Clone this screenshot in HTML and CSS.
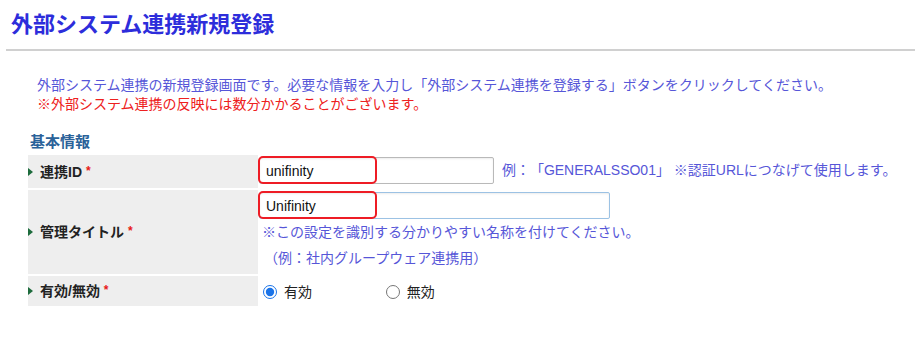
FILE: index.html
```html
<!DOCTYPE html>
<html lang="ja">
  <head>
    <meta charset="utf-8" />
    <title>外部システム連携新規登録</title>
    <link rel="stylesheet" href="styles.css">
  </head>

  <body>
    <h1 class="page-title">外部システム連携新規登録</h1>
    <hr class="title-rule">

    <div class="intro">
      <p class="intro-text">外部システム連携の新規登録画面です。必要な情報を入力し「外部システム連携を登録する」ボタンをクリックしてください。</p>
      <p class="intro-note">※外部システム連携の反映には数分かかることがございます。</p>
    </div>

    <div class="section-title">基本情報</div>

    <table class="form-table">
      <tr class="row-id">
        <th><span class="arrow"></span>連携ID <span class="req">*</span></th>
        <td>
          <span class="field">
            <input type="text" class="text-input input-id" value="unifinity">
            <span class="mark"></span>
          </span>
          <span class="hint">例：「GENERALSSO01」 ※認証URLにつなげて使用します。</span>
        </td>
      </tr>
      <tr class="row-title">
        <th><span class="arrow"></span>管理タイトル <span class="req">*</span></th>
        <td>
          <span class="field">
            <input type="text" class="text-input input-title" value="Unifinity">
            <span class="mark"></span>
          </span>
          <div class="hint hint-block">※この設定を識別する分かりやすい名称を付けてください。</div>
          <div class="hint hint-block hint-example">（例：社内グループウェア連携用）</div>
        </td>
      </tr>
      <tr class="row-status">
        <th><span class="arrow"></span>有効/無効 <span class="req">*</span></th>
        <td>
          <label class="radio-label"><input type="radio" name="status" checked> 有効</label>
          <label class="radio-label"><input type="radio" name="status"> 無効</label>
        </td>
      </tr>
    </table>
  </body>
</html>
```

FILE: styles.css
```css
body {
  margin: 0;
  font-family: "Liberation Sans", "Noto Sans CJK JP", sans-serif;
  background-color: #fff;
  color: #222;
}

.page-title {
  margin: 0;
  padding: 10px 0 0 11px;
  height: 30px;
  line-height: 30px;
  font-size: 22px;
  font-weight: bold;
  color: #2d2ddb;
}

.title-rule {
  margin: 9px 7px 0 6px;
  border: 0;
  border-top: 2px solid #d0d0d0;
}

.intro {
  padding: 25px 0 0 37px;
}

.intro p {
  margin: 0;
  font-size: 14px;
  line-height: 19px;
}

.intro-text {
  color: #5656d8;
}

.intro-note {
  color: #ee2020;
}

.section-title {
  margin: 18px 0 0 30px;
  font-size: 15px;
  line-height: 20px;
  font-weight: bold;
  color: #2a6299;
}

.form-table {
  margin: 1px 0 0 28px;
  border-collapse: separate;
  border-spacing: 0 2px;
  font-size: 14px;
}

.form-table th {
  width: 230px;
  padding: 0 0 2px 0;
  text-align: left;
  font-weight: bold;
  color: #222;
  background-color: #eeeeee;
  vertical-align: middle;
}

.form-table td {
  padding: 0 0 0 1px;
  vertical-align: top;
}

.arrow {
  display: inline-block;
  width: 0;
  height: 0;
  margin-right: 7px;
  border-top: 4px solid transparent;
  border-bottom: 4px solid transparent;
  border-left: 5px solid #1d6b3c;
  vertical-align: 1px;
}

.req {
  color: #e81818;
  font-size: 12px;
  vertical-align: 2px;
}

.row-id td {
  height: 31px;
  padding-top: 2px;
}

.row-title td {
  height: 82px;
  padding-top: 2px;
}

.row-status td {
  height: 30px;
  vertical-align: middle;
}

.field {
  position: relative;
  display: inline-block;
  vertical-align: top;
}

.text-input {
  box-sizing: border-box;
  display: block;
  height: 27px;
  margin: 0;
  padding: 0 6px;
  font-family: "Liberation Sans", "Noto Sans CJK JP", sans-serif;
  font-size: 14px;
  color: #111;
  background-color: #fff;
  border: 1px solid #b9b9b9;
  border-radius: 2px;
  box-shadow: inset 0 1px 2px rgba(0, 0, 0, 0.08);
}

.input-id {
  width: 235px;
}

.input-title {
  width: 351px;
  border-color: #9cc2e4;
}

/* red annotation drawn over the left part of each input */
.mark {
  position: absolute;
  left: -1px;
  top: -1px;
  width: 115px;
  height: 24px;
  border: 2px solid #ee1c25;
  border-radius: 5px;
}

.hint {
  display: inline-block;
  margin-left: 4px;
  line-height: 27px;
  color: #5656d8;
  vertical-align: top;
  text-spacing-trim: space-all;
}

.hint-block {
  display: block;
  margin: 0 0 0 3px;
  line-height: 26px;
}

.hint-example {
  margin-left: 5px;
}

.radio-label {
  display: inline-block;
  margin-right: 66px;
  color: #222;
}

.radio-label input {
  width: 14px;
  height: 14px;
  margin: 0 3px 0 4px;
  vertical-align: -2px;
  accent-color: #1a73e8;
}
```
